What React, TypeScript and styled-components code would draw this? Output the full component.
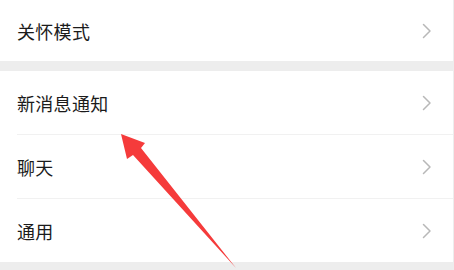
import React from "react";
import styled, { createGlobalStyle } from "styled-components";

const Global = createGlobalStyle`
  html, body { margin: 0; padding: 0; background: #ededed; }
  body { width: 454px; height: 270px; overflow: hidden; font-family: "Noto Sans CJK SC", "Noto Sans", sans-serif; }
`;

const Page = styled.div`
  position: relative;
  width: 453px;
  height: 270px;
  display: flex;
  flex-direction: column;
  background: #ededed;
`;

const Group = styled.div<{ $gapTop?: number }>`
  background: #ffffff;
  margin-top: ${(p) => p.$gapTop ?? 0}px;
  display: flex;
  flex-direction: column;
`;

const Row = styled.div<{ $h: number; $divider?: boolean }>`
  position: relative;
  height: ${(p) => p.$h}px;
  display: flex;
  align-items: center;
  justify-content: space-between;
  padding: 0 21px 0 17px;
  box-sizing: border-box;
  &::after {
    content: "";
    display: ${(p) => (p.$divider ? "block" : "none")};
    position: absolute;
    left: 17px;
    right: 0;
    bottom: 0;
    height: 1px;
    background: #f1f1f1;
  }
`;

const Label = styled.span`
  font-size: 18px;
  color: #1b1b1b;
  letter-spacing: 0.3px;
  line-height: 1;
`;

const Chevron = () => (
  <svg width="10" height="16" viewBox="0 0 10 16" fill="none">
    <path d="M1.5 1.5 L8 8 L1.5 14.5" stroke="#b8b8b8" strokeWidth="1.5" strokeLinecap="round" strokeLinejoin="round" />
  </svg>
);

const ArrowLayer = styled.svg`
  position: absolute;
  left: 0;
  top: 0;
  width: 454px;
  height: 270px;
  pointer-events: none;
`;

const items = [
  { label: "新消息通知", h: 64, divider: true },
  { label: "聊天", h: 64, divider: true },
  { label: "通用", h: 63, divider: false },
];

export default function App() {
  return (
    <>
      <Global />
      <Page>
        <Group>
          <Row $h={61}>
            <Label>关怀模式</Label>
            <Chevron />
          </Row>
        </Group>
        <Group $gapTop={10}>
          {items.map((it) => (
            <Row key={it.label} $h={it.h} $divider={it.divider}>
              <Label>{it.label}</Label>
              <Chevron />
            </Row>
          ))}
        </Group>
        <ArrowLayer viewBox="0 0 454 270">
          <polygon
            points="121,134 145,143 141,148 236,268 133,155 127,159"
            fill="#f53b3b"
          />
        </ArrowLayer>
      </Page>
    </>
  );
}
